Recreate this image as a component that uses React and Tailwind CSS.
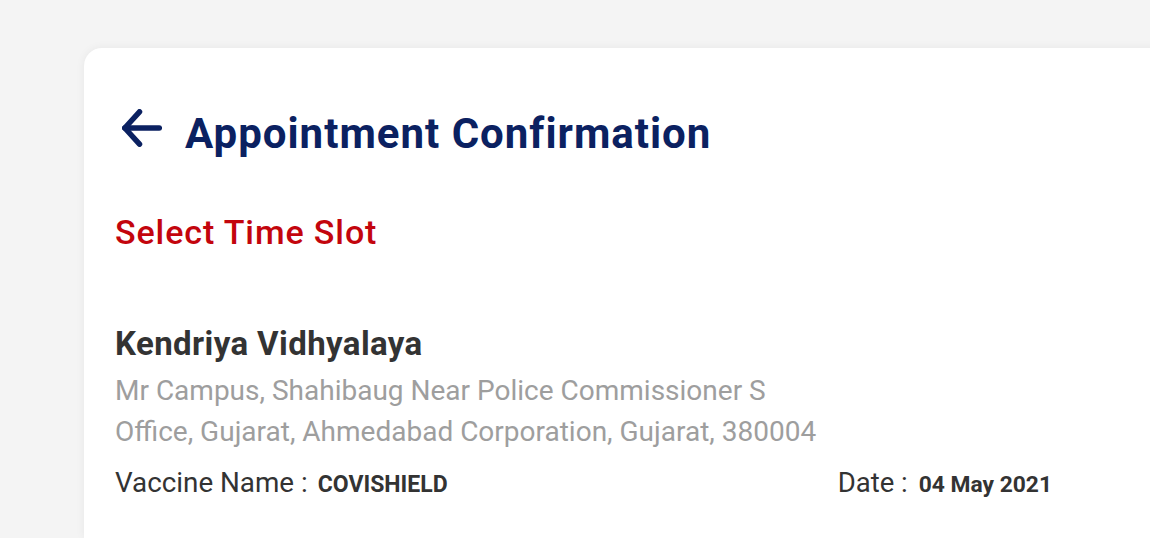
const BackArrow = () => (
  <svg width="40" height="38" viewBox="0 0 40 38" fill="none" stroke="currentColor" strokeWidth="5.5" strokeLinecap="round" strokeLinejoin="round">
    <path d="M37.3 19H2.8" />
    <path d="M17.5 2.8L2.8 19L17.5 35.2" />
  </svg>
);

export default function App() {
  return (
    <div
      className="h-[538px] bg-[#f4f4f4] pl-[84px] pt-[48px] overflow-hidden"
      style={{ fontFamily: 'Roboto, "Noto Sans", sans-serif' }}
    >
      <div className="w-[1100px] h-[490px] bg-white rounded-t-[18px] shadow-[0_0_10px_rgba(0,0,0,0.06)] pl-[31px] pt-[65px]">
        <div className="w-[937px]">
          {/* Header */}
          <div className="flex items-start text-[#0b2161]">
            <div className="ml-[7px] -mt-[4px] mr-[23px]">
              <BackArrow />
            </div>
            <h1 className="text-[42px] font-bold leading-[42px] tracking-[1px]">Appointment Confirmation</h1>
          </div>

          <h2 className="mt-[60px] text-[34px] font-medium text-[#c3050d] leading-[34px] tracking-[0.9px]">
            Select Time Slot
          </h2>

          {/* Centre details */}
          <div className="mt-[78px]">
            <h3 className="text-[33px] font-bold text-[#333333] leading-[33px] tracking-[0.4px]">Kendriya Vidhyalaya</h3>
            <p className="mt-[10px] text-[28px] text-[#9e9e9e] leading-[41px]">
              Mr Campus, Shahibaug Near Police Commissioner S
              <br />
              Office, Gujarat, Ahmedabad Corporation, Gujarat, 380004
            </p>
            <div className="mt-[14px] flex items-baseline justify-between leading-[34px] text-[#333333]">
              <div className="flex items-baseline">
                <span className="text-[27.8px]">Vaccine Name :</span>
                <span className="ml-[10px] text-[23px] font-bold">COVISHIELD</span>
              </div>
              <div className="flex items-baseline">
                <span className="text-[27.5px]">Date :</span>
                <span className="ml-[11px] text-[22.8px] font-bold">04 May 2021</span>
              </div>
            </div>
          </div>
        </div>
      </div>
    </div>
  );
}
